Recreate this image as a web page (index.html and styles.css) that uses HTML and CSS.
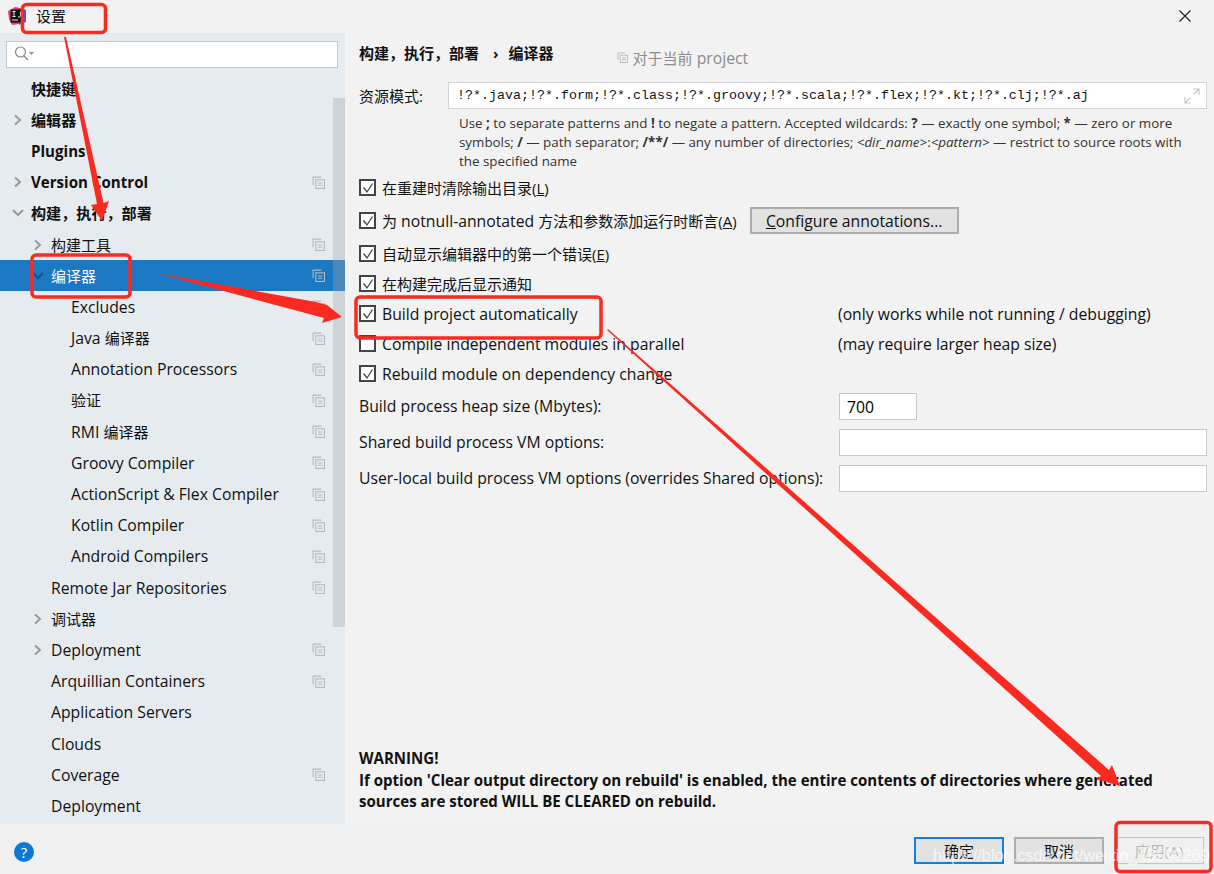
FILE: index.html
```html
<!DOCTYPE html>
<html lang="zh">

<head>
    <meta charset="UTF-8">
    <meta name="viewport" content="width=device-width, initial-scale=1.0">
    <title>设置</title>
    <link rel="stylesheet" href="styles.css">
</head>

<body>
    <svg width="0" height="0" class="defs">
        <symbol id="copy" viewBox="0 0 12 12">
            <path d="M1 8.5V1h7.5" fill="none" stroke="#b4b9bd"/>
            <rect x="3.5" y="3.5" width="8" height="8" fill="none" stroke="#b4b9bd"/>
            <path d="M5.5 6.5h4M5.5 8.5h4" stroke="#b4b9bd"/>
        </symbol>
        <symbol id="closed" viewBox="0 0 10 12">
            <path d="M2 1.5 7 6l-5 4.5" fill="none" stroke="#999" stroke-width="2"/>
        </symbol>
        <symbol id="open" viewBox="0 0 12 10">
            <path d="M1 2l5 5 5-5" fill="none" stroke="#999" stroke-width="2"/>
        </symbol>
        <symbol id="open-dark" viewBox="0 0 12 10">
            <path d="M1 2l5 5 5-5" fill="none" stroke="#17507f" stroke-width="2"/>
        </symbol>
        <symbol id="check" viewBox="0 0 12 12">
            <path d="M1.5 5.5 5 10 10.500 1.500" fill="none" stroke="#444" stroke-width="1.300"/>
        </symbol>
    </svg>

    <div class="titlebar">
        <svg class="logo" width="20" height="20" viewBox="0 0 20 20">
            <path d="M1 5 8 1l5 1-1 16-7 1-3-6z" fill="#e8386f"/>
            <path d="M12 2l7 2v12l-7 3z" fill="#4a55d8"/>
            <path d="M2 5 7 2v6z" fill="#f58a2c"/>
            <rect x="3.500" y="3.500" width="13" height="13" fill="#111"/>
            <rect x="5" y="13.500" width="6" height="1" fill="#eee"/>
            <path d="M5.500 5.500h3M7 5.500v5M5.500 10.500h3M13.500 5.500v4.500a1 1 0 0 1-1 1h-1.500" fill="none" stroke="#eee"/>
        </svg>
        <span class="title">设置</span>
        <svg class="close" width="14" height="14" viewBox="0 0 14 14">
            <path d="M1.500 1.500l11 11M12.500 1.500l-11 11" stroke="#222" stroke-width="1.200"/>
        </svg>
    </div>

    <div class="main">
        <div class="sidebar">
            <div class="search">
                <svg width="20" height="18" viewBox="0 0 20 18">
                    <circle cx="6.500" cy="7" r="5" fill="none" stroke="#8a8a8a" stroke-width="1.200"/>
                    <path d="M10 11l4 4" stroke="#8a8a8a" stroke-width="1.400"/>
                    <path d="M15 7h5l-2.500 3z" fill="#8a8a8a"/>
                </svg>
            </div>
            <div class="tree">
                <div class="row lv0 bold">快捷键</div>
                <div class="row lv0 bold"><svg class="arrow"><use href="#closed"/></svg>编辑器</div>
                <div class="row lv0 bold">Plugins</div>
                <div class="row lv0 bold"><svg class="arrow"><use href="#closed"/></svg>Version Control<svg class="copy"><use href="#copy"/></svg></div>
                <div class="row lv0 bold"><svg class="arrow"><use href="#open"/></svg>构建，执行，部署</div>
                <div class="row lv1"><svg class="arrow"><use href="#closed"/></svg><span class="zh">构建工具</span><svg class="copy"><use href="#copy"/></svg></div>
                <div class="row lv1 selected"><svg class="arrow"><use href="#open-dark"/></svg><span class="zh">编译器</span><svg class="copy"><use href="#copy"/></svg></div>
                <div class="row lv2">Excludes<svg class="copy"><use href="#copy"/></svg></div>
                <div class="row lv2">Java&nbsp;<span class="zh">编译器</span><svg class="copy"><use href="#copy"/></svg></div>
                <div class="row lv2">Annotation Processors<svg class="copy"><use href="#copy"/></svg></div>
                <div class="row lv2"><span class="zh">验证</span><svg class="copy"><use href="#copy"/></svg></div>
                <div class="row lv2">RMI&nbsp;<span class="zh">编译器</span><svg class="copy"><use href="#copy"/></svg></div>
                <div class="row lv2">Groovy Compiler<svg class="copy"><use href="#copy"/></svg></div>
                <div class="row lv2">ActionScript &amp; Flex Compiler<svg class="copy"><use href="#copy"/></svg></div>
                <div class="row lv2">Kotlin Compiler<svg class="copy"><use href="#copy"/></svg></div>
                <div class="row lv2">Android Compilers<svg class="copy"><use href="#copy"/></svg></div>
                <div class="row lv1">Remote Jar Repositories<svg class="copy"><use href="#copy"/></svg></div>
                <div class="row lv1"><svg class="arrow"><use href="#closed"/></svg><span class="zh">调试器</span></div>
                <div class="row lv1"><svg class="arrow"><use href="#closed"/></svg>Deployment<svg class="copy"><use href="#copy"/></svg></div>
                <div class="row lv1">Arquillian Containers<svg class="copy"><use href="#copy"/></svg></div>
                <div class="row lv1">Application Servers</div>
                <div class="row lv1">Clouds</div>
                <div class="row lv1">Coverage<svg class="copy"><use href="#copy"/></svg></div>
                <div class="row lv1">Deployment</div>
            </div>
            <div class="scrollbar"></div>
        </div>

        <div class="content">
            <div class="crumbs">
                <span class="crumb">构建，执行，部署</span>
                <span class="sep">›</span>
                <span class="crumb">编译器</span>
                <span class="project"><svg class="copy-sm"><use href="#copy"/></svg><span class="zh">对于当前</span>&nbsp;project</span>
            </div>

            <div class="pattern">
                <span class="pattern-label zh">资源模式:</span>
                <div class="pattern-input">
                    <span>!?*.java;!?*.form;!?*.class;!?*.groovy;!?*.scala;!?*.flex;!?*.kt;!?*.clj;!?*.aj</span>
                    <svg width="16" height="16" viewBox="0 0 16 16">
                        <path d="M9 1h6v6M15 1 10 6M1 9v6h6M1 15l5-5" fill="none" stroke="#c4c8cc" stroke-width="1.200"/>
                    </svg>
                </div>
            </div>
            <p class="hint">Use <b>;</b> to separate patterns and <b>!</b> to negate a pattern. Accepted wildcards: <b>?</b> — exactly one symbol; <b>*</b> — zero or more symbols; <b>/</b> — path separator; <b>/**/</b> — any number of directories; <i>&lt;dir_name&gt;</i>:<i>&lt;pattern&gt;</i> — restrict to source roots with the specified name</p>

            <div class="check-row tall">
                <span class="box"><svg><use href="#check"/></svg></span>
                <span class="zh">在重建时清除输出目录(<u>L</u>)</span>
            </div>
            <div class="check-row tall">
                <span class="box"><svg><use href="#check"/></svg></span>
                <span><span class="zh">为</span> notnull-annotated <span class="zh">方法和参数添加运行时断言(<u>A</u>)</span></span>
                <button class="btn configure" type="button"><u>C</u>onfigure annotations...</button>
            </div>
            <div class="check-row after-tall">
                <span class="box"><svg><use href="#check"/></svg></span>
                <span class="zh">自动显示编辑器中的第一个错误(<u>E</u>)</span>
            </div>
            <div class="check-row">
                <span class="box"><svg><use href="#check"/></svg></span>
                <span class="zh">在构建完成后显示通知</span>
            </div>
            <div class="check-row">
                <span class="box"><svg><use href="#check"/></svg></span>
                <span class="note-text">Build project automatically</span>
                <span class="note">(only works while not running / debugging)</span>
            </div>
            <div class="check-row">
                <span class="box"></span>
                <span class="note-text">Compile independent modules in parallel</span>
                <span class="note">(may require larger heap size)</span>
            </div>
            <div class="check-row">
                <span class="box"><svg><use href="#check"/></svg></span>
                <span>Rebuild module on dependency change</span>
            </div>

            <div class="field heap">
                <label>Build process heap size (Mbytes):</label>
                <input class="input small" type="text" value="700">
            </div>
            <div class="field">
                <label>Shared build process VM options:</label>
                <input class="input" type="text">
            </div>
            <div class="field">
                <label>User-local build process VM options (overrides Shared options):</label>
                <input class="input" type="text">
            </div>

            <div class="warning">
                WARNING!<br>
                If option 'Clear output directory on rebuild' is enabled, the entire contents of directories where generated sources are stored WILL BE CLEARED on rebuild.
            </div>
        </div>
    </div>

    <div class="footer">
        <div class="help">?</div>
        <div class="buttons">
            <button class="btn ok" type="button">确定</button>
            <button class="btn" type="button">取消</button>
            <button class="btn disabled" type="button">应用(A)</button>
        </div>
    </div>

    <!-- 截图上的红色标注 -->
    <svg class="marks" width="1214" height="874" viewBox="0 0 1214 874">
        <g fill="none" stroke="#fb2a20" stroke-width="3.500">
            <rect x="22.500" y="4.500" width="83" height="28" rx="4"/>
            <rect x="32" y="255" width="98" height="42" rx="4"/>
            <rect x="356" y="297" width="245" height="41" rx="4"/>
            <rect x="1116" y="822.500" width="95" height="49" rx="4"/>
        </g>
        <g fill="#fb2a20">
            <path d="M64 37 66 37 103.500 203 109 201 102 221 91 205 97 204z"/>
            <path d="M157 273 316 302 327 305 342 317 322 323 324 318z"/>
            <path d="M607 330 608 329 1109 770 1112 765 1120 786 1096 779 1101 776z"/>
        </g>
    </svg>
    <div class="watermark">https://blog.csdn.net/weixin_43599269</div>
</body>

</html>
```

FILE: styles.css
```css
* {
    box-sizing: border-box;
}

html,
body {
    margin: 0;
    height: 100%;
}

body {
    width: 1214px;
    height: 874px;
    overflow: hidden;
    position: relative;
    display: flex;
    flex-direction: column;
    background-color: #f2f2f2;
    color: #111;
    font-family: "Open Sans", "Noto Sans CJK SC", sans-serif;
    font-size: 15.75px;
    line-height: 20px;
}

.zh {
    font-size: 15px;
}

.defs {
    position: absolute;
}

.titlebar {
    height: 33px;
    flex: none;
    display: flex;
    align-items: center;
    padding: 0 22px 2px 7px;
}

.logo {
    margin-right: 9px;
}

.title {
    font-size: 15px;
}

.close {
    margin-left: auto;
}

.main {
    flex: 1;
    display: flex;
    min-height: 0;
}

.sidebar {
    width: 345px;
    flex: none;
    position: relative;
    background-color: #e6ebf0;
    padding-top: 8px;
}

.search {
    height: 27px;
    margin: 0 7px 0 6px;
    padding: 3px 0 0 7px;
    background-color: #fff;
    border: 1px solid #c4c8cc;
}

.tree {
    margin-top: 5px;
}

.row {
    height: 31.2px;
    display: flex;
    align-items: center;
    position: relative;
    white-space: nowrap;
}

.lv0 {
    padding-left: 31px;
}

.lv1 {
    padding-left: 51px;
}

.lv2 {
    padding-left: 71px;
}

.bold {
    font-weight: 700;
    font-size: 15.1px;
}

.selected {
    background-color: #1b78c2;
    color: #fff;
}

.arrow {
    position: absolute;
    width: 12px;
    height: 12px;
    margin-left: -19px;
}

.copy {
    position: absolute;
    left: 312px;
    width: 13px;
    height: 13px;
}

.scrollbar {
    position: absolute;
    top: 65px;
    right: 0;
    width: 12px;
    height: 529px;
    background-color: rgba(160, 165, 170, 0.35);
}

.content {
    flex: 1;
    min-width: 0;
    padding: 0 7px 0 14px;
    position: relative;
}

.crumbs {
    height: 40px;
    display: flex;
    align-items: center;
    font-weight: 700;
    font-size: 15px;
}

.sep {
    margin: 0 10px 0 14px;
}

.project {
    margin: 9px 0 0 63px;
    display: flex;
    align-items: center;
    font-weight: 400;
    font-size: 15.75px;
    color: #8c8c8c;
}

.copy-sm {
    width: 11px;
    height: 11px;
    margin-right: 5px;
}

.pattern {
    display: flex;
    align-items: center;
    margin-top: 9px;
}

.pattern-label {
    width: 89px;
    flex: none;
}

.pattern-input {
    flex: 1;
    height: 27px;
    display: flex;
    align-items: center;
    justify-content: space-between;
    padding: 1px 6px 0 8px;
    background-color: #fff;
    border: 1px solid #d4d4d4;
    font-family: "Liberation Mono", "Noto Sans CJK SC", monospace;
    font-size: 13.33px;
}

.hint {
    margin: 5px 10px 0 100px;
    font-size: 13.35px;
    line-height: 19px;
    color: #333;
}

.check-row {
    height: 30px;
    display: flex;
    align-items: center;
}

.check-row.tall {
    height: 33px;
}

.check-row.after-tall {
    margin-top: 1.5px;
}

.box {
    width: 17px;
    height: 17px;
    flex: none;
    margin-right: 6px;
    background-color: #fff;
    border: 2px solid #444;
    padding: 0.5px;
}

.box svg {
    display: block;
    width: 12px;
    height: 12px;
}

.btn {
    font: inherit;
    height: 27px;
    padding: 0;
    background-color: #e1e1e1;
    border: 2px solid #adadad;
    color: #111;
}

.configure {
    width: 209px;
    margin-left: 13px;
}

.note-text {
    width: 456px;
    flex: none;
}

.field {
    height: 36px;
    display: flex;
    align-items: center;
    justify-content: space-between;
}

.field label {
    padding-bottom: 2px;
}

.input {
    width: 368px;
    height: 27px;
    padding: 0 7px;
    font: inherit;
    background-color: #fff;
    border: 1px solid #c8c8c8;
    outline: none;
}

.field.heap label {
    width: 480px;
}

.input.small {
    width: 78px;
    margin-right: auto;
}

.warning {
    position: absolute;
    left: 14px;
    right: 40px;
    top: 715px;
    font-weight: 700;
    font-size: 15.05px;
    line-height: 21.500px;
}

.footer {
    height: 50px;
    flex: none;
    display: flex;
    align-items: center;
    justify-content: space-between;
    background-color: #f0f0f0;
    padding: 0 10px 0 14px;
}

.help {
    width: 20px;
    height: 20px;
    margin-top: 5px;
    border-radius: 50%;
    background-color: #0a78d7;
    color: #fff;
    text-align: center;
    font-size: 15px;
    line-height: 20px;
}

.buttons {
    display: flex;
    gap: 10px;
    padding-top: 3px;
}

.buttons .btn {
    width: 90px;
    height: 27px;
    font-size: 15px;
}

.ok {
    border-color: #0a84e0;
}

.buttons .disabled {
    color: #b5b5b5;
    background-color: #f0f0f0;
    border: 1px solid #c4c4c4;
}

.marks {
    position: absolute;
    left: 0;
    top: 0;
    pointer-events: none;
}

.watermark {
    position: absolute;
    left: 933px;
    top: 845px;
    font-family: "Liberation Sans", sans-serif;
    font-size: 16.300px;
    color: rgba(255, 255, 255, 0.72);
    white-space: nowrap;
}
```
